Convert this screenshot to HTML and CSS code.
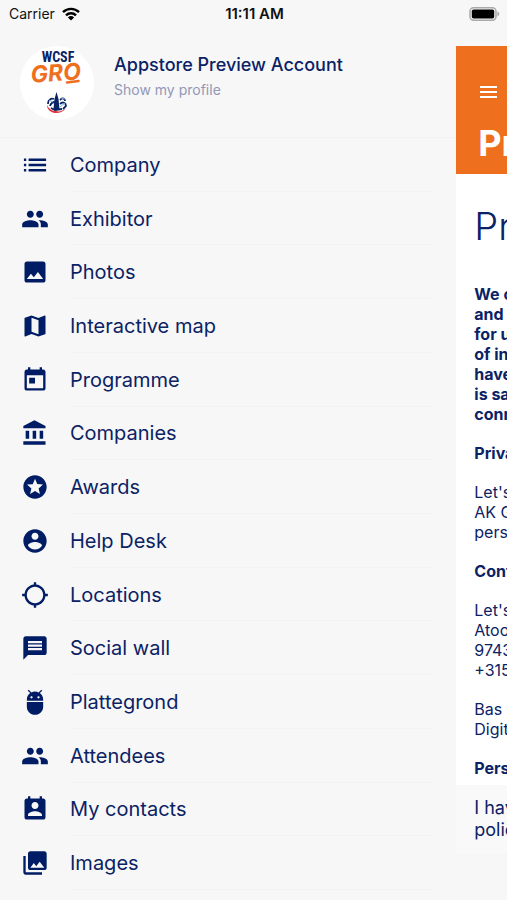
FILE: index.html
```html
<!DOCTYPE html>
<html lang="en">
  <head>
    <meta charset="UTF-8" />
    <meta name="viewport" content="width=device-width, initial-scale=1.0"/>
    <title>WCSF GRO</title>
    <link rel="stylesheet" href="styles.css">
  </head>

  <body>
    <header class="status-bar">
      <div class="carrier">
        Carrier
        <svg width="18" height="14" viewBox="0 0 18 14" aria-hidden="true">
          <g fill="none" stroke="#000" stroke-width="2.4">
            <path d="M1 5.2a11.4 11.4 0 0 1 16 0"/>
            <path d="M4 8.4a7 7 0 0 1 10 0"/>
          </g>
          <path d="M9 13.6 5.9 10.4a4.5 4.5 0 0 1 6.2 0z"/>
        </svg>
      </div>
      <div class="clock">11:11 AM</div>
      <div class="battery">
        <svg width="31" height="14" viewBox="0 0 31 14" aria-hidden="true">
          <rect x="1" y=".8" width="26" height="12.4" rx="3.6" fill="#f7f7f7" stroke="#a9a9a9" stroke-width="1.5"/>
          <rect x="2.8" y="2.5" width="22.4" height="9" rx="1.8"/>
          <path d="M28.4 4.6c2.4.8 2.4 4 0 4.8z" fill="#a9a9a9"/>
        </svg>
      </div>
    </header>

    <div class="app">
      <aside class="drawer">
        <a class="profile" href="#profile">
          <svg class="avatar" viewBox="0 0 74 74" aria-hidden="true">
            <circle cx="37" cy="37" r="37" fill="#fff"/>
            <text class="logo-top" x="38" y="16" text-anchor="middle">WCSF</text>
            <text class="logo-main" x="36" y="35" text-anchor="middle" transform="rotate(-4 37 30)">GRO</text>
            <path d="M47 36.500 58.500 35" stroke="#ee701e" stroke-width="2.600" stroke-linecap="round"/>
            <path d="M27 59c0 9 14 11 19 3-3 3-7 4-10 3-4 0-7-2-9-6z" fill="#e0343f"/>
            <path d="M36.500 46 38.500 53l1 10h-6l1-10z" fill="#0a2463"/>
            <path d="M28 58c-.5-4 3-6 6-5M30 60c1-3 3-4 5-4M40 54c3-3 5-1 5 1M40 58c3-3 6-1 6 2l-3 3M31 62l4 2 7-1" fill="none" stroke="#0a2463" stroke-width="1.800"/>
            <path d="M29 54l4 2M41 52l4 1M40 61l5-4" stroke="#78a5d5" stroke-width="1"/>
          </svg>
          <span class="profile-text">
            <span class="profile-name">Appstore Preview Account</span>
            <span class="profile-link">Show my profile</span>
          </span>
        </a>

        <nav class="menu">
          <a href="#company">
            <svg viewBox="0 0 24 24"><path d="M2 6h2v2H2zm0 4.500h2v2H2zM2 15h2v2H2zM6 6h15v2H6zm0 4.500h15v2H6zM6 15h15v2H6z" transform="translate(.5 .5)"/></svg>
            <span>Company</span>
          </a>
          <a href="#exhibitor">
            <svg viewBox="0 0 24 24"><path d="M16 11c1.660 0 2.990-1.340 2.990-3S17.660 5 16 5s-3 1.340-3 3 1.340 3 3 3zm-8 0c1.660 0 2.990-1.340 2.990-3S9.660 5 8 5 5 6.340 5 8s1.340 3 3 3zm0 2c-2.330 0-7 1.170-7 3.500V19h14v-2.500c0-2.330-4.670-3.500-7-3.500zm8 0c-.29 0-.62.02-.97.05 1.160.84 1.970 1.970 1.970 3.450V19h6v-2.500c0-2.330-4.670-3.500-7-3.500z"/></svg>
            <span>Exhibitor</span>
          </a>
          <a href="#photos">
            <svg viewBox="0 0 24 24"><path d="M21 19V5c0-1.100-.9-2-2-2H5c-1.100 0-2 .9-2 2v14c0 1.100.9 2 2 2h14c1.100 0 2-.9 2-2zM8.500 13.500l2.500 3.010L14.500 12l4.500 6H5l3.500-4.500z"/></svg>
            <span>Photos</span>
          </a>
          <a href="#map">
            <svg viewBox="0 0 24 24"><path d="M20.500 3l-.16.03L15 5.100 9 3 3.360 4.900c-.21.07-.36.25-.36.48V20.500c0 .28.22.5.5.5l.16-.03L9 18.900l6 2.100 5.640-1.900c.21-.07.36-.25.36-.48V3.500c0-.28-.22-.5-.5-.5zM15 19l-6-2.110V5l6 2.110V19z"/></svg>
            <span>Interactive map</span>
          </a>
          <a href="#programme">
            <svg viewBox="0 0 24 24"><path d="M19 3h-1V1h-2v2H8V1H6v2H5c-1.110 0-1.990.9-1.990 2L3 19c0 1.100.89 2 2 2h14c1.100 0 2-.9 2-2V5c0-1.100-.9-2-2-2zm0 16H5V8h14v11zM7 10h5v5H7z"/></svg>
            <span>Programme</span>
          </a>
          <a href="#companies">
            <svg viewBox="0 0 24 24"><path d="M4 10v7h3v-7H4zm6 0v7h3v-7h-3zM2 22h19v-3H2v3zm14-12v7h3v-7h-3zm-4.500-9L2 6v2h19V6l-9.500-5z"/></svg>
            <span>Companies</span>
          </a>
          <a href="#awards">
            <svg viewBox="0 0 24 24"><path d="M11.990 2C6.470 2 2 6.480 2 12s4.470 10 9.990 10C17.520 22 22 17.520 22 12S17.520 2 11.990 2zm4.240 16L12 15.450 7.770 18l1.120-4.810-3.730-3.230 4.920-.42L12 5l1.920 4.530 4.920.42-3.730 3.230L16.230 18z"/></svg>
            <span>Awards</span>
          </a>
          <a href="#help">
            <svg viewBox="0 0 24 24"><path d="M12 2C6.480 2 2 6.480 2 12s4.480 10 10 10 10-4.480 10-10S17.520 2 12 2zm0 3c1.660 0 3 1.340 3 3s-1.340 3-3 3-3-1.340-3-3 1.340-3 3-3zm0 14.200c-2.500 0-4.710-1.280-6-3.220.03-1.990 4-3.080 6-3.080 1.990 0 5.970 1.090 6 3.080-1.290 1.940-3.500 3.220-6 3.220z"/></svg>
            <span>Help Desk</span>
          </a>
          <a href="#locations">
            <svg viewBox="0 0 24 24"><path d="M20.940 11c-.46-4.170-3.770-7.480-7.940-7.940V1h-2v2.060C6.830 3.520 3.520 6.830 3.060 11H1v2h2.060c.46 4.170 3.770 7.480 7.940 7.940V23h2v-2.060c4.170-.46 7.480-3.770 7.940-7.940H23v-2h-2.060zM12 19c-3.870 0-7-3.130-7-7s3.130-7 7-7 7 3.130 7 7-3.130 7-7 7z"/></svg>
            <span>Locations</span>
          </a>
          <a href="#social">
            <svg viewBox="0 0 24 24"><path d="M20 2H4c-1.100 0-1.990.9-1.990 2L2 22l4-4h14c1.100 0 2-.9 2-2V4c0-1.100-.9-2-2-2zM18 14H6v-2h12v2zm0-3H6V9h12v2zm0-3H6V6h12v2z"/></svg>
            <span>Social wall</span>
          </a>
          <a href="#plattegrond">
            <svg viewBox="0 0 24 24"><path d="M5 16c0 3.870 3.130 7 7 7s7-3.130 7-7v-4H5v4zM16.120 4.370l2.100-2.100-.82-.83-2.300 2.310C14.160 3.280 13.120 3 12 3s-2.160.28-3.090.75L6.600 1.440l-.82.83 2.100 2.100C6.140 5.640 5 7.680 5 10v1h14v-1c0-2.320-1.140-4.360-2.880-5.630zM9 9c-.55 0-1-.45-1-1s.45-1 1-1 1 .45 1 1-.45 1-1 1zm6 0c-.55 0-1-.45-1-1s.45-1 1-1 1 .45 1 1-.45 1-1 1z"/></svg>
            <span>Plattegrond</span>
          </a>
          <a href="#attendees">
            <svg viewBox="0 0 24 24"><path d="M16 11c1.660 0 2.990-1.340 2.990-3S17.660 5 16 5s-3 1.340-3 3 1.340 3 3 3zm-8 0c1.660 0 2.990-1.340 2.990-3S9.660 5 8 5 5 6.340 5 8s1.340 3 3 3zm0 2c-2.330 0-7 1.170-7 3.500V19h14v-2.500c0-2.330-4.670-3.500-7-3.500zm8 0c-.29 0-.62.02-.97.05 1.160.84 1.970 1.970 1.970 3.450V19h6v-2.500c0-2.330-4.670-3.500-7-3.500z"/></svg>
            <span>Attendees</span>
          </a>
          <a href="#contacts">
            <svg viewBox="0 0 24 24"><path d="M19 3h-1V1h-2v2H8V1H6v2H5c-1.110 0-2 .9-2 2v14c0 1.100.89 2 2 2h14c1.100 0 2-.9 2-2V5c0-1.100-.9-2-2-2zm-7 3c1.660 0 3 1.340 3 3s-1.340 3-3 3-3-1.340-3-3 1.340-3 3-3zm6 12H6v-1c0-2 4-3.100 6-3.100s6 1.100 6 3.100v1z"/></svg>
            <span>My contacts</span>
          </a>
          <a href="#images">
            <svg viewBox="0 0 24 24"><path d="M22 16V4c0-1.100-.9-2-2-2H8c-1.100 0-2 .9-2 2v12c0 1.100.9 2 2 2h12c1.100 0 2-.9 2-2zm-11-4l2.030 2.710L16 11l4 5H8l3-4zM2 6v14c0 1.100.9 2 2 2h14v-2H4V6H2z"/></svg>
            <span>Images</span>
          </a>
        </nav>
      </aside>

      <!-- current page, pushed aside while the drawer is open -->
      <main class="page">
        <div class="page-header">
          <button class="menu-btn" type="button" aria-label="Menu">
            <svg width="17" height="12" viewBox="0 0 17 12"><path d="M0 0h17v2H0zm0 5h17v2H0zm0 5h17v2H0z" fill="#fff"/></svg>
          </button>
          <h1>Privacy</h1>
        </div>
        <article class="policy">
          <h2>Privacy</h2>
          <p><strong>We care about your privacy<br>and we only collect data<br>for use in this app. All<br>of information that we<br>have about you<br>is safe and stored<br>connected to you.</strong></p>
          <p><strong>Privacy policy</strong></p>
          <p>Let's Gro<br>AK Groningen<br>personal data</p>
          <p><strong>Contact details</strong></p>
          <p>Let's Gro<br>Atoomweg<br>9743 AK Groningen<br>+315</p>
          <p>Bas is the<br>Digital officer</p>
          <p><strong>Personal data</strong></p>
        </article>
        <div class="consent">I have read the<br>policy</div>
      </main>
    </div>
  </body>
</html>
```
FILE: styles.css
```css
* {
  box-sizing: border-box;
}

body {
  margin: 0;
  font-family: Inter, 'Liberation Sans', sans-serif;
  background-color: #f7f7f7;
  color: #0b2265;
  display: flex;
  flex-direction: column;
  height: 100vh;
  overflow: hidden;
}

a {
  color: inherit;
  text-decoration: none;
}

.status-bar {
  display: grid;
  grid-template-columns: 1fr auto 1fr;
  align-items: center;
  height: 27px;
  padding: 0 7px 0 9px;
  color: #111;
  font-size: 14px;
}

.carrier {
  display: flex;
  align-items: center;
  gap: 7px;
}

.clock {
  font-size: 15px;
  font-weight: 600;
}

.battery {
  display: flex;
  justify-content: flex-end;
}

.app {
  flex: 1;
  display: flex;
  min-height: 0;
}

.drawer {
  flex: 0 0 90%;
  display: flex;
  flex-direction: column;
  padding-bottom: 10px;
}

.profile {
  display: flex;
  align-items: center;
  gap: 20px;
  padding: 19px 20px 17px;
  border-bottom: 1px solid #f3f3f3;
}

.avatar {
  width: 74px;
  height: 74px;
}

.logo-top {
  font: bold 14px 'Roboto Condensed', 'DejaVu Sans Condensed', sans-serif;
  fill: #0b2265;
}

.logo-main {
  font: italic 700 23px Inter, sans-serif;
  fill: #ee701e;
}

.profile-text {
  display: flex;
  flex-direction: column;
  gap: 3px;
  padding-bottom: 13px;
}

.profile-name {
  font-size: 18px;
  font-weight: 500;
  line-height: 24px;
}

.profile-link {
  font-size: 14px;
  line-height: 20px;
  color: #9298b8;
}

.menu {
  flex: 1;
  display: grid;
  grid-auto-rows: 1fr;
  padding: 0 24px 0 21px;
}

.menu a {
  display: flex;
  align-items: center;
  gap: 21px;
  font-size: 20px;
}

.menu svg {
  width: 28px;
  height: 28px;
  fill: #001c64;
}

.menu span {
  flex: 1;
  align-self: stretch;
  display: flex;
  align-items: center;
  padding-top: 1px;
  border-bottom: 1px solid #f3f3f3;
}

.page {
  flex: 0 0 100%;
  margin-top: 19px;
  white-space: nowrap;
}

.page-header {
  height: 128px;
  padding: 38px 22px 0;
  background-color: #ee701e;
  color: #fff;
}

.menu-btn {
  display: block;
  padding: 2px;
  border: 0;
  background: none;
  cursor: pointer;
}

.page-header h1 {
  margin: 18px 0 0;
  font-size: 36px;
  line-height: 44px;
}

.policy {
  padding: 28px 18px 7px;
  background-color: #fff;
  font-size: 16px;
  line-height: 20px;
}

.policy h2 {
  margin: 0 0 34px;
  font-size: 38px;
  font-weight: 300;
  line-height: 48px;
}

.policy p {
  margin: 0 0 19px;
}

.policy p:last-child {
  margin: 0;
}

.consent {
  padding: 12px 18px;
  background-color: #f9f9f9;
  font-size: 18px;
  line-height: 22px;
}
```
